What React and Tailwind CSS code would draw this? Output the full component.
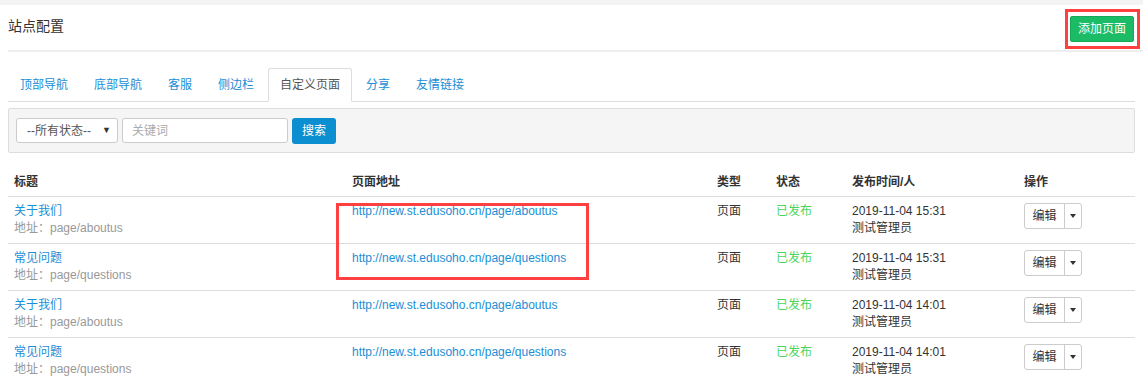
import React from 'react'

const font = { fontFamily: '"Liberation Sans", "Noto Sans CJK SC", sans-serif' }

const tabs = ['顶部导航', '底部导航', '客服', '侧边栏', '自定义页面', '分享', '友情链接']

const rows = [
  { title: '关于我们', path: 'page/aboutus', url: 'http://new.st.edusoho.cn/page/aboutus', time: '2019-11-04 15:31' },
  { title: '常见问题', path: 'page/questions', url: 'http://new.st.edusoho.cn/page/questions', time: '2019-11-04 15:31' },
  { title: '关于我们', path: 'page/aboutus', url: 'http://new.st.edusoho.cn/page/aboutus', time: '2019-11-04 14:01' },
  { title: '常见问题', path: 'page/questions', url: 'http://new.st.edusoho.cn/page/questions', time: '2019-11-04 14:01' },
]

const cols = 'grid grid-cols-[338px_365px_59px_76px_172px_1fr]'

function App() {
  return (
    <div className="w-[1143px] h-[383px] overflow-hidden bg-white text-[12px] text-[#333]" style={font}>
      <div className="h-[5px] bg-[#f3f3f3]" />

      {/* 标题栏 */}
      <div className="ml-2 h-[47px] flex items-center justify-between border-b-2 border-[#eee]">
        <h1 className="text-[14px] leading-5 -mt-[4px]">站点配置</h1>
        <div className="mr-[3px] mt-[3px] border-[3px] border-[#ff4040] pl-[2px] pr-[3px] py-[4px]">
          <button className="h-[26px] w-[64px] rounded-[2px] bg-[#1cbb66] border border-[#18a85a] text-white text-[12px] leading-none">添加页面</button>
        </div>
      </div>

      <div className="mx-2">
        {/* 标签页 */}
        <div className="mt-4 h-[34px] flex border-b border-[#ddd]">
          {tabs.map((t, i) => (
            <div
              key={t}
              className={
                i === 4
                  ? 'mr-[2px] h-[34px] px-[11px] flex items-center border border-[#ddd] border-b-white rounded-t-[3px] bg-white text-[#555]'
                  : 'mr-[2px] h-[33px] px-3 flex items-center text-[#1a8ed6]'
              }
            >
              {t}
            </div>
          ))}
        </div>

        {/* 筛选 */}
        <div className="mt-[6px] h-[45px] bg-[#f5f5f5] border border-[#ddd] rounded-[2px] flex items-center pl-[7px] gap-1">
          <div className="h-[25px] w-[102px] bg-white border border-[#ccc] rounded-[3px] flex items-center justify-between pl-[10px] pr-[6px] text-[#555]">
            <span>--所有状态--</span>
            <span className="text-[9px] text-[#333]">▼</span>
          </div>
          <div className="h-[25px] w-[166px] bg-white border border-[#ccc] rounded-[3px] flex items-center pl-[9px] text-[#aaa]">关键词</div>
          <button className="h-[26px] w-[44px] rounded-[3px] bg-[#0b8fd0] text-white text-[12px] leading-none">搜索</button>
        </div>

        {/* 表格 */}
        <div className="relative mt-[15px]">
          <div className={cols + ' h-[29px] items-center border-b border-[#ddd] font-bold text-[#333]'}>
            <div className="pl-[6px]">标题</div>
            <div className="pl-[6px]">页面地址</div>
            <div className="pl-[6px]">类型</div>
            <div className="pl-[6px]">状态</div>
            <div className="pl-[6px]">发布时间/人</div>
            <div className="pl-[6px]">操作</div>
          </div>

          {rows.map((r, i) => (
            <div key={i} className={cols + ' h-[47px] border-b border-[#ddd] pt-[6px] leading-[17px]'}>
              <div className="pl-[6px]">
                <div className="text-[#1a8ed6]">{r.title}</div>
                <div className="text-[#999]">地址：{r.path}</div>
              </div>
              <div className="pl-[6px] text-[#1a8ed6]">{r.url}</div>
              <div className="pl-[6px]">页面</div>
              <div className="pl-[6px] text-[#4bd45e]">已发布</div>
              <div className="pl-[6px]">
                <div>{r.time}</div>
                <div>测试管理员</div>
              </div>
              <div className="pl-[6px]">
                <div className="flex h-[26px] w-[58px] border border-[#ccc] rounded-[3px]">
                  <div className="w-[40px] flex items-center justify-center border-r border-[#ccc]">编辑</div>
                  <div className="flex-1 flex items-center justify-center">
                    <span className="w-0 h-0 border-l-[3px] border-r-[3px] border-t-[4px] border-l-transparent border-r-transparent border-t-[#333]" />
                  </div>
                </div>
              </div>
            </div>
          ))}

          {/* 标注框 */}
          <div className="absolute left-[328px] top-[35px] w-[253px] h-[77px] border-[3px] border-[#ff4040] pointer-events-none" />
        </div>
      </div>
    </div>
  )
}

export default App
